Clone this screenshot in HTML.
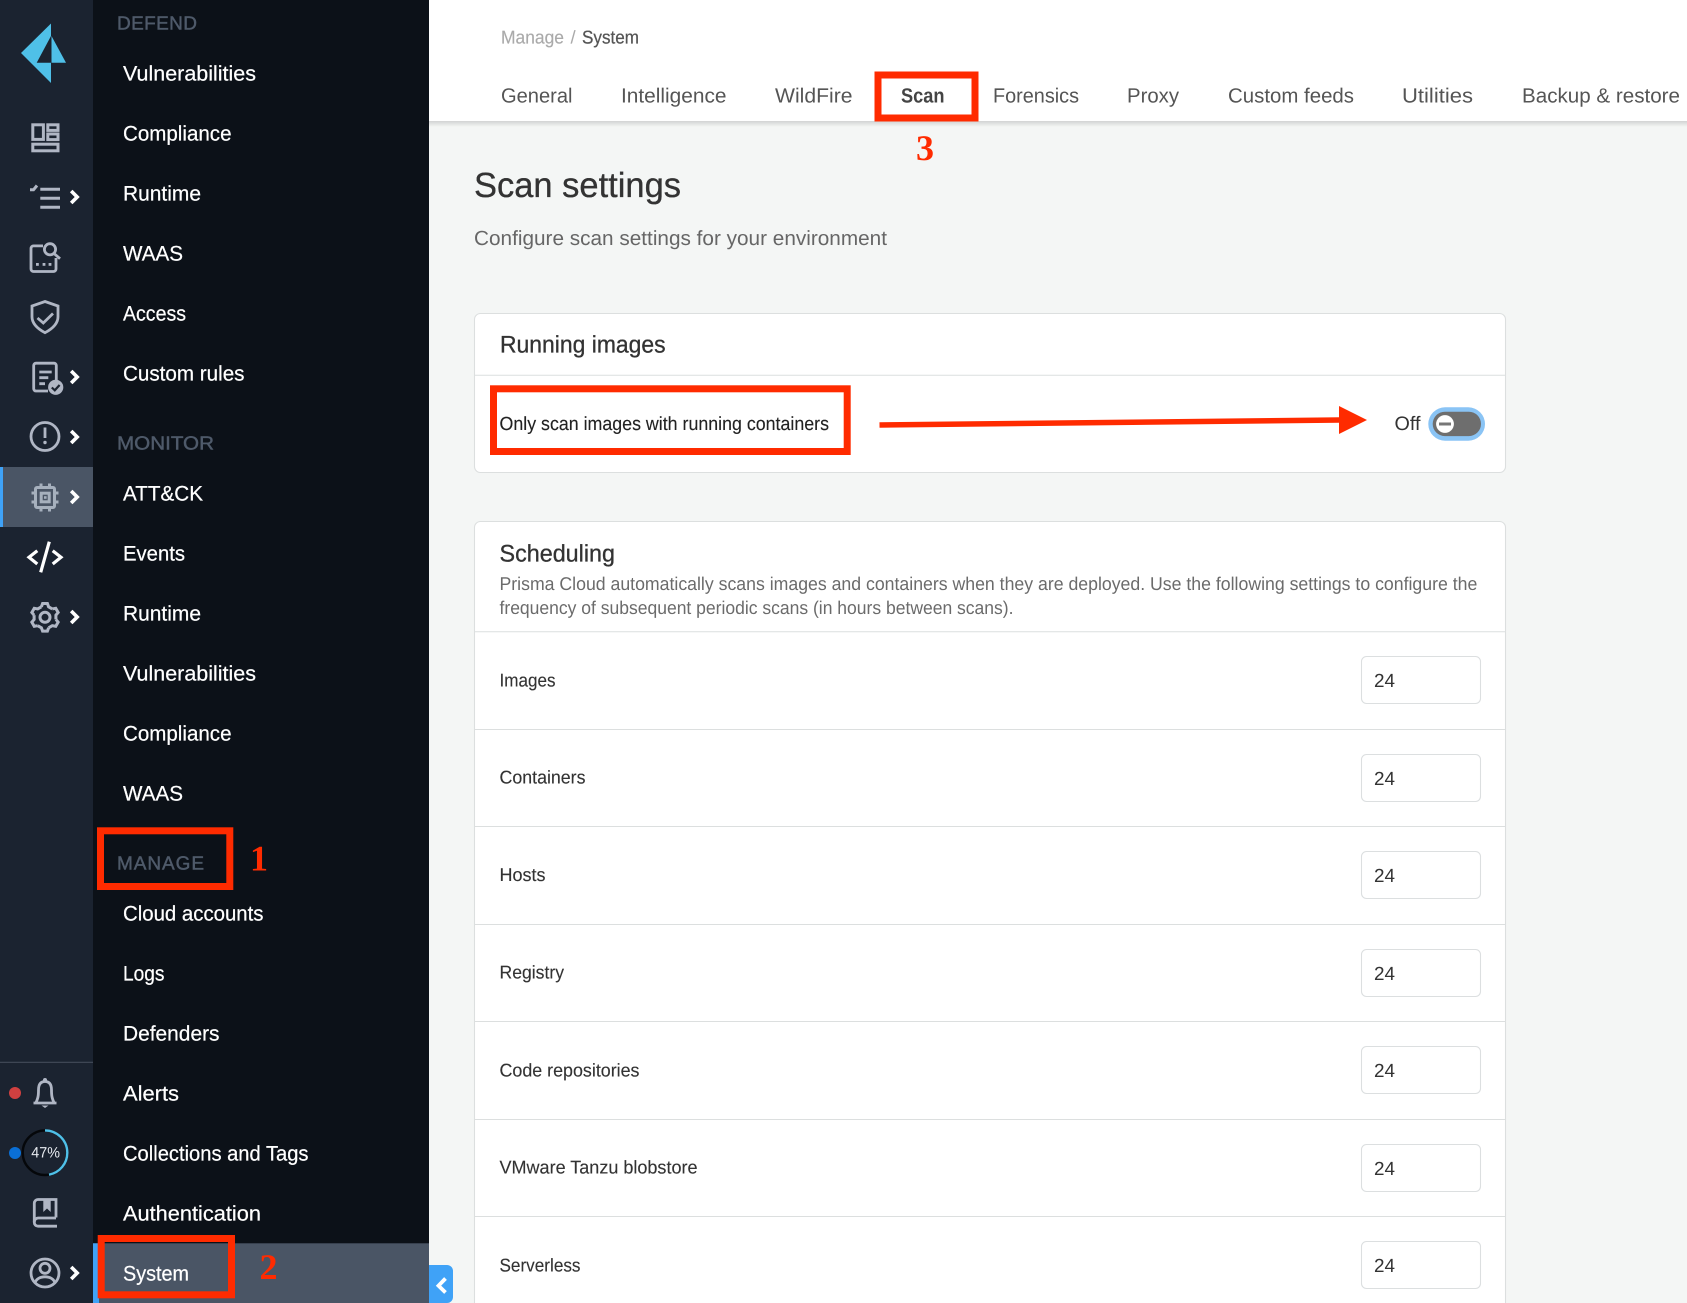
<!DOCTYPE html>
<html lang="en">
<head>
<meta charset="utf-8">
<title>Scan settings</title>
<style>
html,body{margin:0;padding:0;background:#f4f6f5}
svg{display:block}
text{font-family:"Liberation Sans",sans-serif;text-rendering:geometricPrecision}
.nav{font-size:21px;fill:#fff;stroke:#fff;stroke-width:.22}
.sec{font-size:19px;fill:#4f5a6a;stroke:#4f5a6a;stroke-width:.45}
.tab{font-size:20.5px;fill:#555}
.rl{font-size:18.5px;fill:#333;stroke:#333;stroke-width:.12}
.val{font-size:19px;fill:#333}
.hd{fill:#333;stroke:#333;stroke-width:.3}
.num{font-family:"Liberation Serif",serif;font-weight:700;fill:#ff2b00;font-size:36px}
.ic{fill:none;stroke:#b0b6c4;stroke-width:2.8}
.ch{fill:none;stroke:#fff;stroke-width:3.6}
.box{fill:none;stroke:#ff2b00;stroke-width:7}
.inp{fill:#fff;stroke:#dcdfe0;stroke-width:1.1}
.ln{stroke:#dcdfdf;stroke-width:1}
</style>
</head>
<body>
<svg xmlns="http://www.w3.org/2000/svg" width="1687" height="1303" viewBox="0 0 1687 1303">
<defs>
<linearGradient id="sh" x1="0" y1="0" x2="0" y2="1"><stop offset="0" stop-color="#000" stop-opacity=".14"/><stop offset="1" stop-color="#000" stop-opacity="0"/></linearGradient>
</defs>
<!-- backgrounds -->
<rect x="0" y="0" width="1687" height="1303" fill="#f4f6f5"/>
<rect x="429" y="121" width="1258" height="6" fill="url(#sh)"/>
<rect x="429" y="0" width="1258" height="121" fill="#fff"/>
<rect x="0" y="0" width="93" height="1303" fill="#1b2330"/>
<rect x="93" y="0" width="336" height="1303" fill="#0c1118"/>

<!-- rail active -->
<rect x="0" y="467" width="93" height="60" fill="#4a5565"/>
<rect x="0" y="467" width="3" height="60" fill="#3fa2f7"/>
<line x1="0" y1="1062.3" x2="93" y2="1062.3" stroke="#434c5a" stroke-width="1.2"/>

<!-- logo -->
<polygon points="21,53 51,23.5 51,83" fill="#4fc0e8"/>
<polygon points="36.7,62.7 51,36 51,62.7" fill="#1b2330"/>
<polygon points="51.5,36 66,62.7 51.5,62.7" fill="#4fc0e8"/>

<!-- dashboard -->
<g class="ic" style="stroke-width:3">
<rect x="32.8" y="124.8" width="10.6" height="14.6"/>
<rect x="47.8" y="124.8" width="10.2" height="5.6"/>
<rect x="47.8" y="134" width="10.2" height="5.6"/>
<rect x="32.8" y="144.2" width="25.2" height="6.6"/>
</g>
<!-- list -->
<g fill="none" stroke="#b0b6c4" stroke-width="3">
<path d="M40.3 189.3H60M40.3 198.3H60M40.3 207.3H60"/>
<path d="M30 189.8L33.5 189.8L37 185.5" stroke-width="3"/>
</g>
<!-- search box -->
<g class="ic">
<path d="M43 245.9H33.5a2.5 2.5 0 0 0-2.5 2.5V269a2.5 2.5 0 0 0 2.5 2.5H53.5a2.5 2.5 0 0 0 2.5-2.5V258"/>
<circle cx="50" cy="249.3" r="5.6"/>
<path d="M54 253.5L60 258.7"/>
</g>
<g fill="#b0b6c4"><rect x="36" y="263" width="2.8" height="2.8"/><rect x="42.6" y="263" width="2.8" height="2.8"/><rect x="48.6" y="263" width="2.8" height="2.8"/></g>
<!-- shield -->
<g class="ic">
<path d="M45 301.5L58 306V316.7C58 325 50 330 45 332.7C40 330 32 325 32 316.7V306Z"/>
<path d="M37.5 318L43.3 323L53 313.5"/>
</g>
<!-- doc -->
<g class="ic">
<path d="M48 391H36a2.3 2.3 0 0 1-2.3-2.3V365.5a2.3 2.3 0 0 1 2.3-2.3H54a2.3 2.3 0 0 1 2.3 2.3V380"/>
<path d="M39.3 372H51.7M39.3 377.7H48.3M39.3 383.7H45"/>
</g>
<circle cx="55.7" cy="387.3" r="7.6" fill="#b0b6c4"/>
<path d="M51.8 387.5L54.8 390.3L59.6 385" fill="none" stroke="#1b2330" stroke-width="2.2"/>
<!-- alert -->
<circle cx="45" cy="436.5" r="14" class="ic"/>
<rect x="43.6" y="427.5" width="2.8" height="10.5" fill="#b0b6c4"/>
<circle cx="45" cy="442.5" r="1.7" fill="#b0b6c4"/>
<!-- chip -->
<g fill="none" stroke="#a6b0bd" stroke-width="3">
<rect x="35.5" y="487.5" width="19" height="20" rx="1.5"/>
<rect x="41.2" y="493.2" width="8" height="8.6"/>
<path d="M41 483.5V487M49.5 483.5V487M41 508V511.5M49.5 508V511.5M31.5 493H35M31.5 502H35M55 493H58.5M55 502H58.5"/>
</g>
<rect x="44" y="496.2" width="2.6" height="2.6" fill="#a6b0bd"/>
<!-- code -->
<g fill="none" stroke="#fff" stroke-width="3.2">
<path d="M37.3 550.7L29 557.3L37.3 564"/>
<path d="M52.7 550.7L61 557.3L52.7 564"/>
<path d="M49.3 541.7L40.7 572.3"/>
</g>
<!-- gear -->
<g fill="none" stroke="#b0b6c4" stroke-width="3" transform="translate(45 617.3)">
<path d="M-3.6-10.5L-2.4-13.8H2.4L3.6-10.5L7.29-8.37"/>
<path transform="rotate(60)" d="M-3.6-10.5L-2.4-13.8H2.4L3.6-10.5L7.29-8.37"/>
<path transform="rotate(120)" d="M-3.6-10.5L-2.4-13.8H2.4L3.6-10.5L7.29-8.37"/>
<path transform="rotate(180)" d="M-3.6-10.5L-2.4-13.8H2.4L3.6-10.5L7.29-8.37"/>
<path transform="rotate(240)" d="M-3.6-10.5L-2.4-13.8H2.4L3.6-10.5L7.29-8.37"/>
<path transform="rotate(300)" d="M-3.6-10.5L-2.4-13.8H2.4L3.6-10.5L7.29-8.37"/>
<circle r="5"/>
</g>
<!-- chevrons -->
<g class="ch">
<path d="M71.2 191L77.2 197L71.2 203"/>
<path d="M71.2 371L77.2 377L71.2 383"/>
<path d="M71.2 431L77.2 437L71.2 443"/>
<path d="M71.2 491L77.2 497L71.2 503"/>
<path d="M71.2 611L77.2 617L71.2 623"/>
<path d="M71.2 1267L77.2 1273L71.2 1279"/>
</g>
<!-- bell -->
<circle cx="15" cy="1093" r="6" fill="#d04040"/>
<g class="ic">
<path d="M33.5 1103H56.5"/>
<path d="M36 1102.7C38 1098 38.5 1096 38.5 1090C38.5 1084 41 1081.5 45 1081.5C49 1081.5 51.5 1084 51.5 1090C51.5 1096 52 1098 54 1102.7"/>
</g>
<circle cx="45" cy="1080" r="2" fill="#b0b6c4"/>
<path d="M41.5 1105.5H48.5L45 1108Z" fill="#b0b6c4"/>
<!-- ring -->
<circle cx="15" cy="1153" r="6" fill="#0a6fd6"/>
<circle cx="45" cy="1152.7" r="22.3" fill="none" stroke="#05070a" stroke-width="2.4"/>
<circle cx="45" cy="1152.7" r="22.3" fill="none" stroke="#4fc0e8" stroke-width="2.4" stroke-dasharray="65.9 140.1" transform="rotate(-90 45 1152.7)"/>
<text x="31.3" y="1157.5" font-size="15" fill="#e8ebf0" textLength="28.7" lengthAdjust="spacingAndGlyphs">47%</text>
<!-- book -->
<g class="ic">
<path d="M56 1217.5V1199.5H38a3.7 3.7 0 0 0-3.7 3.7V1222.5a3.7 3.7 0 0 0 3.7 3.7H57"/>
<path d="M34.3 1222a4 4 0 0 1 4-4H56"/>
</g>
<path d="M43.3 1199.5H50.7V1212L47 1208.5L43.3 1212Z" fill="#b0b6c4"/>
<!-- user -->
<g class="ic">
<circle cx="45" cy="1273" r="14"/>
<circle cx="45" cy="1268.3" r="5"/>
<path d="M35 1283C36 1279 40 1276.8 45 1276.8C50 1276.8 54 1279 55 1283"/>
</g>

<!-- nav -->
<text class="sec" x="117" y="29.7" textLength="80" lengthAdjust="spacing">DEFEND</text>
<text class="nav" x="123" y="80.5" textLength="133" lengthAdjust="spacingAndGlyphs">Vulnerabilities</text>
<text class="nav" x="123" y="140.5" textLength="108.5" lengthAdjust="spacingAndGlyphs">Compliance</text>
<text class="nav" x="123" y="200.5" textLength="78" lengthAdjust="spacingAndGlyphs">Runtime</text>
<text class="nav" x="123" y="260.5" textLength="60" lengthAdjust="spacingAndGlyphs">WAAS</text>
<text class="nav" x="123" y="320.5" textLength="63" lengthAdjust="spacingAndGlyphs">Access</text>
<text class="nav" x="123" y="380.5" textLength="121.5" lengthAdjust="spacingAndGlyphs">Custom rules</text>
<text class="sec" x="117" y="449.7" textLength="97" lengthAdjust="spacingAndGlyphs">MONITOR</text>
<text class="nav" x="123" y="500.5" textLength="80" lengthAdjust="spacingAndGlyphs">ATT&amp;CK</text>
<text class="nav" x="123" y="560.5" textLength="62" lengthAdjust="spacingAndGlyphs">Events</text>
<text class="nav" x="123" y="620.5" textLength="78" lengthAdjust="spacingAndGlyphs">Runtime</text>
<text class="nav" x="123" y="680.5" textLength="133" lengthAdjust="spacingAndGlyphs">Vulnerabilities</text>
<text class="nav" x="123" y="740.5" textLength="108.5" lengthAdjust="spacingAndGlyphs">Compliance</text>
<text class="nav" x="123" y="800.5" textLength="60" lengthAdjust="spacingAndGlyphs">WAAS</text>
<text class="sec" x="117" y="869.7" textLength="87" lengthAdjust="spacing">MANAGE</text>
<text class="nav" x="123" y="920.6" textLength="140.5" lengthAdjust="spacingAndGlyphs">Cloud accounts</text>
<text class="nav" x="123" y="980.6" textLength="41.5" lengthAdjust="spacingAndGlyphs">Logs</text>
<text class="nav" x="123" y="1040.6" textLength="96.5" lengthAdjust="spacingAndGlyphs">Defenders</text>
<text class="nav" x="123" y="1100.6" textLength="56" lengthAdjust="spacingAndGlyphs">Alerts</text>
<text class="nav" x="123" y="1160.6" textLength="185.5" lengthAdjust="spacingAndGlyphs">Collections and Tags</text>
<text class="nav" x="123" y="1220.6" textLength="138" lengthAdjust="spacingAndGlyphs">Authentication</text>
<rect x="93" y="1243.3" width="336" height="60" fill="#4a5565"/>
<rect x="93" y="1243.3" width="6" height="60" fill="#3fa2f7"/>
<text class="nav" x="123" y="1280.6" textLength="66" lengthAdjust="spacingAndGlyphs">System</text>

<!-- collapse -->
<path d="M429 1265H447a6 6 0 0 1 6 6V1297a6 6 0 0 1-6 6H429Z" fill="#3fa2f7"/>
<path d="M445.5 1278.5L438.5 1285.7L445.5 1292.5" fill="none" stroke="#fff" stroke-width="3.8"/>

<!-- header -->
<text x="501" y="43.7" font-size="18.5" fill="#aaa" stroke="#aaa" stroke-width=".15" textLength="63" lengthAdjust="spacingAndGlyphs">Manage</text>
<text x="570.5" y="43.7" font-size="18.5" fill="#aaa">/</text>
<text x="582" y="43.7" font-size="18.5" fill="#555" stroke="#555" stroke-width=".25" textLength="57" lengthAdjust="spacingAndGlyphs">System</text>
<text class="tab" x="501" y="102.7" textLength="71.5" lengthAdjust="spacingAndGlyphs">General</text>
<text class="tab" x="621" y="102.7" textLength="105.5" lengthAdjust="spacingAndGlyphs">Intelligence</text>
<text class="tab" x="775" y="102.7" textLength="77.5" lengthAdjust="spacingAndGlyphs">WildFire</text>
<text class="tab" x="901" y="102.7" textLength="43.5" lengthAdjust="spacingAndGlyphs" font-weight="700" style="fill:#444">Scan</text>
<text class="tab" x="993" y="102.7" textLength="86" lengthAdjust="spacingAndGlyphs">Forensics</text>
<text class="tab" x="1127" y="102.7" textLength="52" lengthAdjust="spacingAndGlyphs">Proxy</text>
<text class="tab" x="1228" y="102.7" textLength="126" lengthAdjust="spacingAndGlyphs">Custom feeds</text>
<text class="tab" x="1402" y="102.7" textLength="71" lengthAdjust="spacingAndGlyphs">Utilities</text>
<text class="tab" x="1522" y="102.7" textLength="158" lengthAdjust="spacingAndGlyphs">Backup &amp; restore</text>

<!-- title -->
<text class="hd" x="474" y="197" font-size="35" textLength="207" lengthAdjust="spacingAndGlyphs">Scan settings</text>
<text x="474" y="245" font-size="20.5" fill="#666" textLength="413" lengthAdjust="spacingAndGlyphs">Configure scan settings for your environment</text>

<!-- card 1 -->
<rect x="474.5" y="313.5" width="1031" height="159" rx="6" fill="#fff" stroke="#dcdfdf" stroke-width="1.1"/>
<line class="ln" x1="475" y1="375.3" x2="1505" y2="375.3"/>
<text class="hd" x="500" y="352.3" font-size="24" textLength="165.6" lengthAdjust="spacingAndGlyphs">Running images</text>
<text x="499.5" y="430" font-size="19" fill="#222" stroke="#222" stroke-width=".12" textLength="329.5" lengthAdjust="spacingAndGlyphs">Only scan images with running containers</text>
<text x="1394.5" y="430" font-size="19.5" fill="#333" textLength="26" lengthAdjust="spacingAndGlyphs">Off</text>
<rect x="1428.3" y="407.3" width="56.7" height="33.4" rx="16.7" fill="#8ac4f5"/>
<rect x="1432.7" y="411.7" width="48.3" height="24.4" rx="12.2" fill="#6e6e6e"/>
<circle cx="1445" cy="424" r="8.9" fill="#fff"/>
<rect x="1439" y="422.5" width="12" height="3" fill="#777"/>

<!-- arrow -->
<path d="M879.5 425L1340 420" stroke="#ff2b00" stroke-width="5.5" fill="none"/>
<polygon points="1339,406 1367,420 1339,434" fill="#ff2b00"/>

<!-- card 2 -->
<rect x="474.5" y="521.5" width="1031" height="800" rx="6" fill="#fff" stroke="#dcdfdf" stroke-width="1.1"/>
<text class="hd" x="499.5" y="561.7" font-size="24" textLength="115.5" lengthAdjust="spacingAndGlyphs">Scheduling</text>
<text x="499.5" y="590" font-size="18.5" fill="#6b6b6b" textLength="977.8" lengthAdjust="spacingAndGlyphs">Prisma Cloud automatically scans images and containers when they are deployed. Use the following settings to configure the</text>
<text x="499.5" y="613.8" font-size="18.5" fill="#6b6b6b" textLength="514" lengthAdjust="spacingAndGlyphs">frequency of subsequent periodic scans (in hours between scans).</text>
<line class="ln" x1="475" y1="631.7" x2="1505" y2="631.7"/>
<line class="ln" x1="475" y1="729.5" x2="1505" y2="729.5"/>
<line class="ln" x1="475" y1="826.5" x2="1505" y2="826.5"/>
<line class="ln" x1="475" y1="924.5" x2="1505" y2="924.5"/>
<line class="ln" x1="475" y1="1021.5" x2="1505" y2="1021.5"/>
<line class="ln" x1="475" y1="1119.5" x2="1505" y2="1119.5"/>
<line class="ln" x1="475" y1="1216.5" x2="1505" y2="1216.5"/>

<text class="rl" x="499.5" y="686.5" textLength="56" lengthAdjust="spacingAndGlyphs">Images</text>
<text class="rl" x="499.5" y="783.3" textLength="86" lengthAdjust="spacingAndGlyphs">Containers</text>
<text class="rl" x="499.5" y="881.2" textLength="46" lengthAdjust="spacingAndGlyphs">Hosts</text>
<text class="rl" x="499.5" y="978.6" textLength="64.5" lengthAdjust="spacingAndGlyphs">Registry</text>
<text class="rl" x="499.5" y="1076.4" textLength="140" lengthAdjust="spacingAndGlyphs">Code repositories</text>
<text class="rl" x="499.5" y="1173.4" textLength="198" lengthAdjust="spacingAndGlyphs">VMware Tanzu blobstore</text>
<text class="rl" x="499.5" y="1271.3" textLength="81" lengthAdjust="spacingAndGlyphs">Serverless</text>

<rect class="inp" x="1361.5" y="656.5" width="119" height="47" rx="5"/>
<rect class="inp" x="1361.5" y="754.5" width="119" height="47" rx="5"/>
<rect class="inp" x="1361.5" y="851.5" width="119" height="47" rx="5"/>
<rect class="inp" x="1361.5" y="949.5" width="119" height="47" rx="5"/>
<rect class="inp" x="1361.5" y="1046.5" width="119" height="47" rx="5"/>
<rect class="inp" x="1361.5" y="1144.5" width="119" height="47" rx="5"/>
<rect class="inp" x="1361.5" y="1241.5" width="119" height="47" rx="5"/>
<text class="val" x="1374" y="686.9" textLength="21" lengthAdjust="spacingAndGlyphs">24</text>
<text class="val" x="1374" y="784.9" textLength="21" lengthAdjust="spacingAndGlyphs">24</text>
<text class="val" x="1374" y="881.9" textLength="21" lengthAdjust="spacingAndGlyphs">24</text>
<text class="val" x="1374" y="979.9" textLength="21" lengthAdjust="spacingAndGlyphs">24</text>
<text class="val" x="1374" y="1076.9" textLength="21" lengthAdjust="spacingAndGlyphs">24</text>
<text class="val" x="1374" y="1174.9" textLength="21" lengthAdjust="spacingAndGlyphs">24</text>
<text class="val" x="1374" y="1271.9" textLength="21" lengthAdjust="spacingAndGlyphs">24</text>

<!-- annotations -->
<rect class="box" x="100.5" y="830.8" width="129.3" height="55.7"/>
<rect class="box" x="101.2" y="1238.5" width="130.3" height="56.3"/>
<rect x="878" y="75" width="97" height="43" class="box"/>
<rect x="493.5" y="388.8" width="353.7" height="62.7" class="box"/>
<text class="num" x="250" y="870.7">1</text>
<text class="num" x="259.5" y="1279">2</text>
<text class="num" x="916" y="160">3</text>
</svg>
</body>
</html>
